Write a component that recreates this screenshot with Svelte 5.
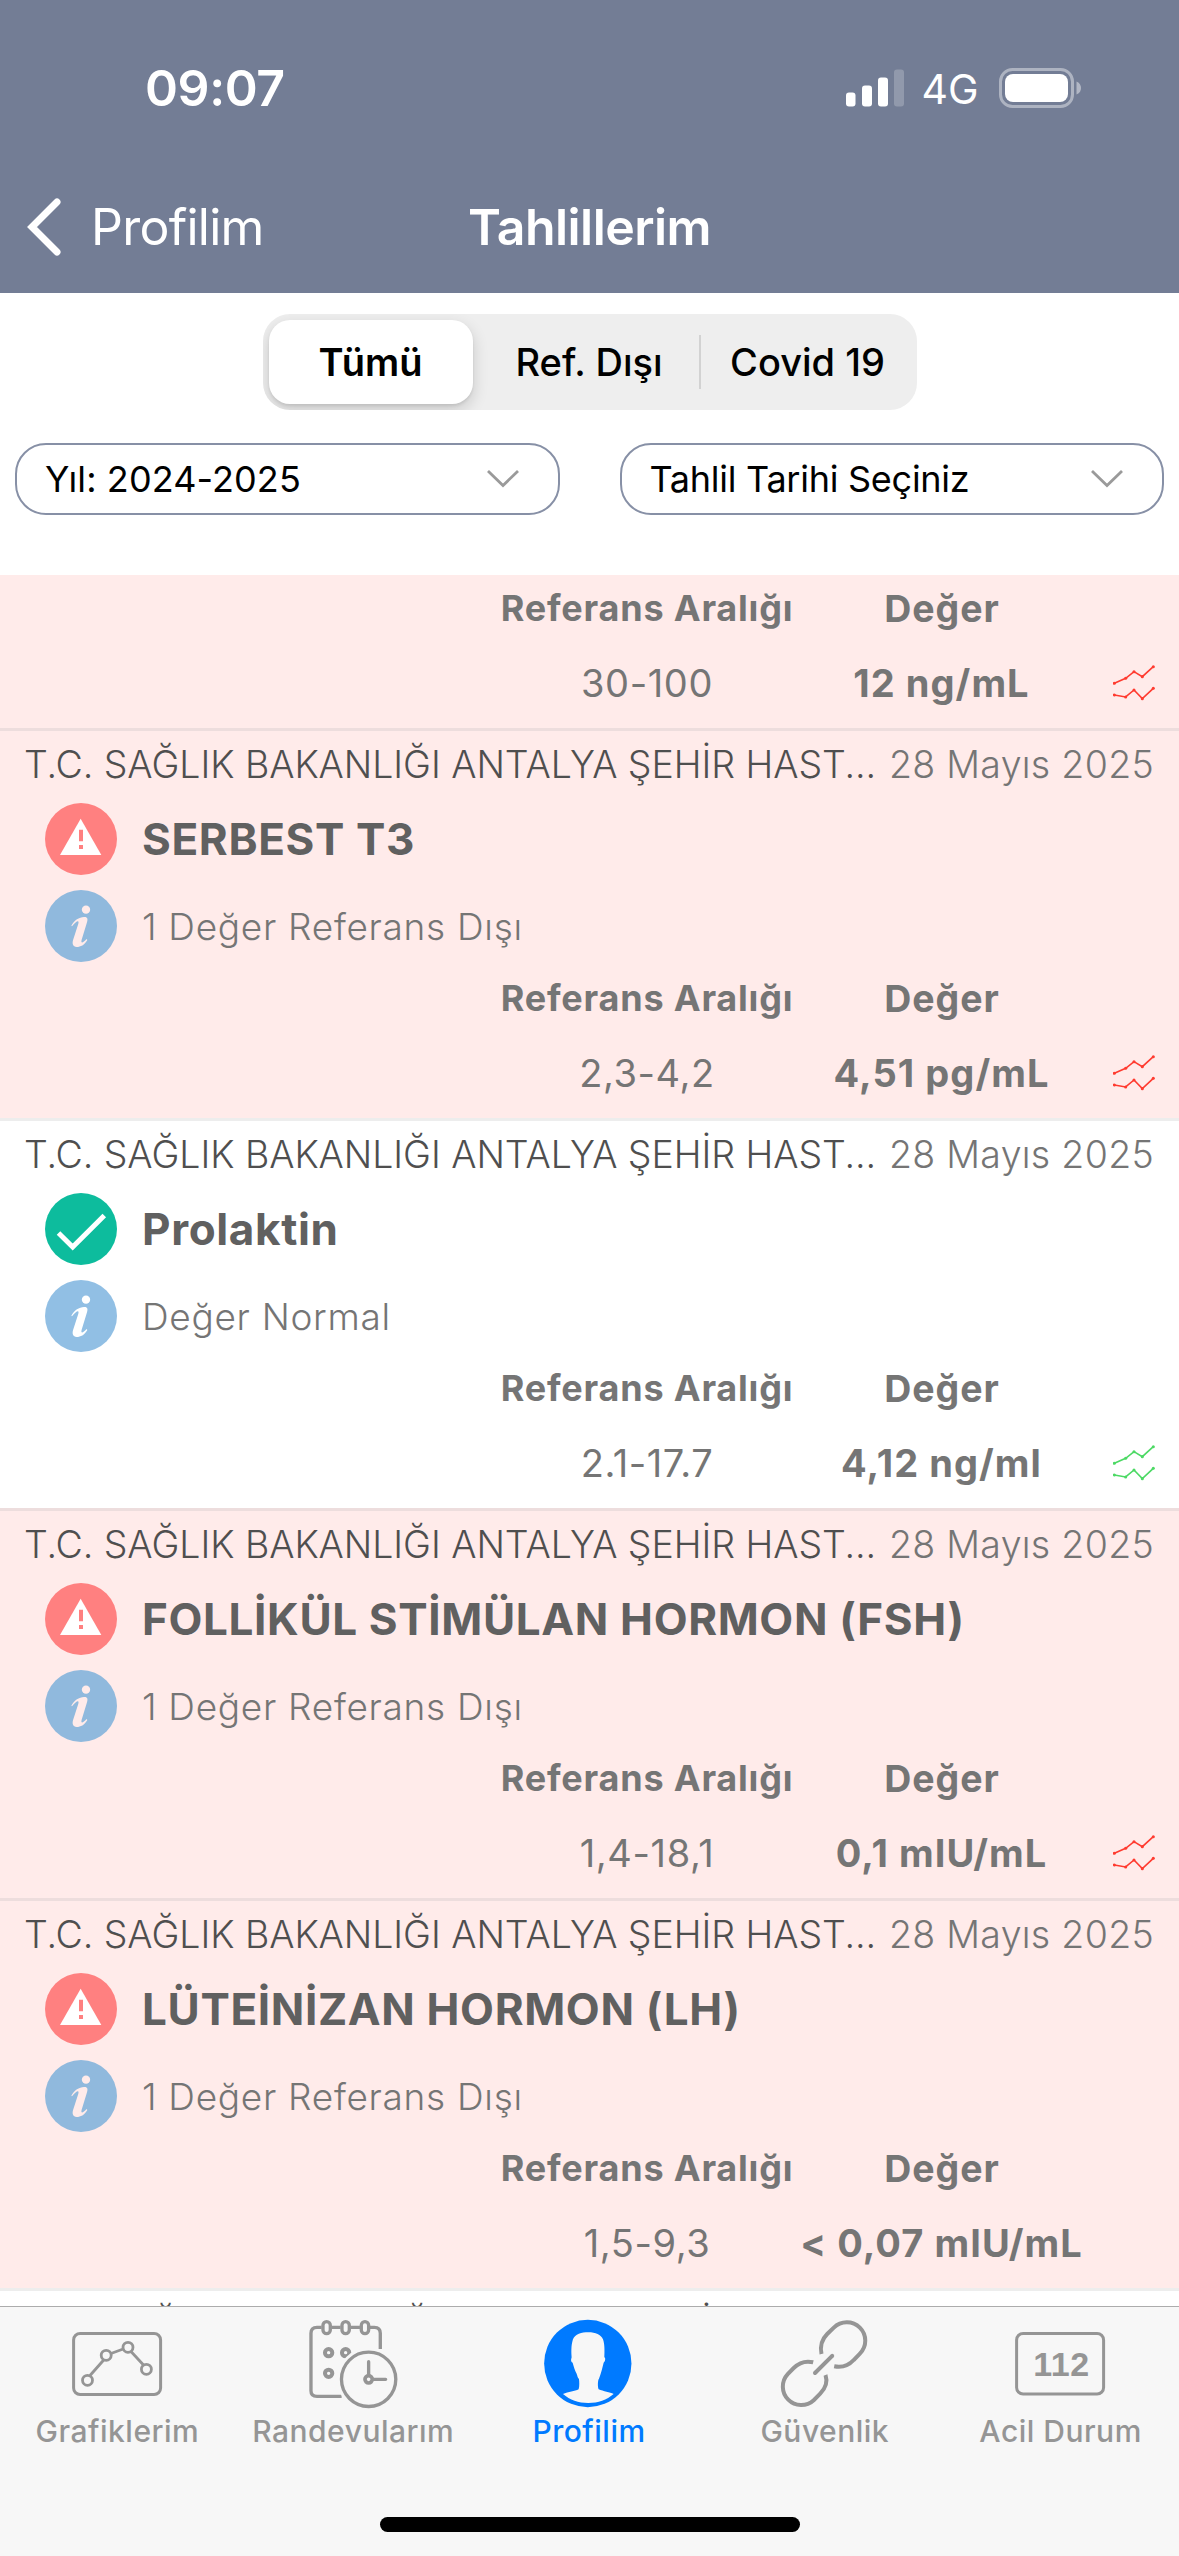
<script>
  const HOSPITAL = 'T.C. SAĞLIK BAKANLIĞI ANTALYA ŞEHİR HASTANESİ';
  const DATE = '28 Mayıs 2025';

  const results = [
    { partial: true, normal: false, range: '30-100', value: '12 ng/mL', trend: true },
    { name: 'SERBEST T3', normal: false, note: '1 Değer Referans Dışı', range: '2,3-4,2', value: '4,51 pg/mL', trend: true },
    { name: 'Prolaktin', normal: true, note: 'Değer Normal', range: '2.1-17.7', value: '4,12 ng/ml', trend: true },
    { name: 'FOLLİKÜL STİMÜLAN HORMON (FSH)', normal: false, note: '1 Değer Referans Dışı', range: '1,4-18,1', value: '0,1 mIU/mL', trend: true },
    { name: 'LÜTEİNİZAN HORMON (LH)', normal: false, note: '1 Değer Referans Dışı', range: '1,5-9,3', value: '< 0,07 mIU/mL', trend: false }
  ];

  const segments = ['Tümü', 'Ref. Dışı', 'Covid 19'];
  const selects = ['Yıl: 2024-2025', 'Tahlil Tarihi Seçiniz'];
  const tabs = [
    { id: 'chart', label: 'Grafiklerim' },
    { id: 'calendar', label: 'Randevularım' },
    { id: 'profile', label: 'Profilim' },
    { id: 'link', label: 'Güvenlik' },
    { id: 'emergency', label: 'Acil Durum' }
  ];
  let segment = $state(0);
  let tab = $state('profile');
</script>

<div class="screen">
  <header>
    <div class="status">
      <span class="time">09:07</span>
      <svg class="signal" viewBox="0 0 58 38">
        <rect x="0" y="23.5" width="9.5" height="14" rx="3" />
        <rect x="16" y="16.5" width="10" height="21" rx="3" />
        <rect x="32" y="8.5" width="10" height="29" rx="3" />
        <rect x="48" y="0.5" width="10" height="37" rx="3" opacity=".22" />
      </svg>
      <span class="network">4G</span>
      <svg class="battery" viewBox="0 0 82 40">
        <rect x="1.5" y="1.5" width="72" height="37" rx="12" fill="none" stroke="#fff" stroke-opacity=".42" stroke-width="3" />
        <rect x="6" y="6" width="63" height="28" rx="8" />
        <path d="M77.5 13.5 C81 15 82 17.500 82 20 C82 22.500 81 25 77.500 26.500 Z" opacity=".45" />
      </svg>
    </div>
    <div class="nav">
      <button class="back">
        <svg viewBox="0 0 34 60"><path d="M30 5 L5 30 L30 55" /></svg>
        Profilim
      </button>
      <h1>Tahlillerim</h1>
    </div>
  </header>

  <div class="segments">
    {#each segments as label, i}
      <button class:active={segment === i} onclick={() => (segment = i)}>{label}</button>
    {/each}
  </div>

  <div class="filters">
    {#each selects as label, i}
      <button class:tight={i === 1}>
        {label}
        <svg viewBox="0 0 34 20"><path d="M2 2 L17 16.500 L32 2" /></svg>
      </button>
    {/each}
  </div>

  <main>
    {#each results as r}
      <article class:normal={r.normal} class:partial={r.partial}>
        {#if !r.partial}
          <div class="source">
            <span class="hospital">{HOSPITAL.slice(0, 40)}...</span>
            <span class="date">{DATE}</span>
          </div>
          <div class="line">
            {#if r.normal}
              <svg viewBox="0 0 72 72">
                <circle cx="36" cy="36" r="36" fill="#0dbc9d" />
                <path d="M13.500 40 L27.700 54 L59.300 22.500" fill="none" stroke="#fff" stroke-width="5" />
              </svg>
            {:else}
              <svg viewBox="45 21 216 216">
                <circle cx="153" cy="129" r="108" fill="#ff8080" />
                <path d="M152 68 L214 177 H90 Z" fill="#fff" />
                <path d="M147 101 H159 V136 H147 Z M147 147 H159 V159 H147 Z" fill="#ff8080" />
              </svg>
            {/if}
            <h2>{r.name}</h2>
          </div>
          <div class="line">
            <svg viewBox="45 281 216 216" class="info">
              <circle cx="153" cy="389" r="108" />
              <circle cx="168" cy="340" r="12.500" class="mark" />
              <path class="mark" d="M124 388 C133 371 147 363 162 362 C173 361 174 368 171 378 L155 430 C152 441 157 442 170 428 L172 431 C163 446 152 452 140 452 C129 451 126 443 129 432 L145 382 C148 372 141 371 126 390 Z" />
            </svg>
            <p>{r.note}</p>
          </div>
        {/if}
        <div class="grid heads">
          <span class="range-head">Referans Aralığı</span>
          <span class="value-head">Değer</span>
        </div>
        <div class="grid">
          <span class="range">{r.range}</span>
          <span class="value">{r.value}</span>
          {#if r.trend}
            <svg class="trend" viewBox="27 32 126 106">
              <polyline points="31,87 65,72 90,52 115,67 148,37" />
              <polyline points="31,122 65,128 90,107 115,133 148,102" />
              {#each [[31, 87], [65, 72], [90, 52], [115, 67], [148, 37], [31, 122], [65, 128], [90, 107], [115, 133], [148, 102]] as [x, y]}
                <circle cx={x} cy={y} r="4.600" />
              {/each}
            </svg>
          {/if}
        </div>
      </article>
    {/each}
    <article class="normal">
      <div class="source">
        <span class="hospital">{HOSPITAL.slice(0, 40)}...</span>
        <span class="date">{DATE}</span>
      </div>
    </article>
  </main>

  <footer>
    <nav>
      {#each tabs as t}
        <button class:active={tab === t.id} onclick={() => (tab = t.id)}>
          <svg viewBox="0 0 96 96">
            {#if t.id === 'chart'}
              <rect x="3.600" y="17.500" width="87" height="61" rx="6.500" stroke-width="3" />
              <path stroke-width="2.800" d="M20 59.500 L33.700 44 M41 37.500 L53.200 33 M61 35.500 L73.500 49" />
              {#each [[17.5, 64.3], [36.2, 39.3], [58, 31.3], [76.4, 53.3]] as [x, y]}
                <circle cx={x} cy={y} r="5" stroke-width="2.800" />
              {/each}
            {:else if t.id === 'calendar'}
              <g transform="translate(-5.700 -4) scale(.33333)" stroke-width="10">
                <path d="M124 253 H50 Q32 253 32 236 V64 Q32 46 50 46 H64 M94 46 H121 M151 46 H179 M209 46 H222 Q240 46 240 64 V111" />
                <rect x="68" y="29" width="22" height="36" rx="11" />
                <rect x="125" y="29" width="22" height="36" rx="11" />
                <rect x="183" y="29" width="22" height="36" rx="11" />
                <circle cx="85" cy="122" r="11" stroke-width="12" />
                <circle cx="136" cy="122" r="11" stroke-width="12" />
                <circle cx="85" cy="184" r="11" stroke-width="12" />
                <circle cx="205" cy="202" r="95" fill="#f7f7f7" stroke="none" />
                <circle cx="205" cy="202" r="81.500" />
                <circle cx="205" cy="202" r="11" stroke-width="11" />
                <path stroke-linecap="round" d="M205 190 V149 M217 202 H256" />
              </g>
            {:else if t.id === 'profile'}
              <g transform="translate(-2.700 -4) scale(.33333)" stroke="none">
                <circle cx="148.500" cy="154.500" r="131" fill="currentColor" />
                <path fill="#f7f7f7" d="M74 246 C90 240 110 238 121 232 C124 222 123 210 122 200 C119 200 117 190 115 185 C110 175 106 163 103 152 C98 150 97 145 100 136 C98 110 100 95 104 82 C110 66 130 61 150 61 C172 61 188 68 194 82 C199 95 199 115 198 136 C202 137 202 148 196 152 C193 165 188 185 182 200 C178 205 178 225 181 232 C195 238 215 241 226 246 C205 264 180 273 150 273 C120 273 95 264 74 246 Z" />
              </g>
            {:else if t.id === 'link'}
              <g stroke-width="4" transform="translate(-.800 0)">
                <path d="M45.300 38 C43.700 30.500 45.500 23.500 51 18 L57.600 11.600 A18.400 18.400 0 0 1 83.700 37.600 L77.500 44 C72 50 65 51.700 58 50.300" />
                <path d="M37 46.300 C30 44.600 23 46.500 17.500 52 L11.500 58.200 A18.400 18.400 0 0 0 37.500 84.200 L44 77.700 C49.500 72 51.500 65.500 49.300 59" />
                <path stroke-linecap="round" d="M56 39.800 L38.800 57" />
              </g>
            {:else}
              <rect x="3.600" y="17.500" width="87" height="60.500" rx="6.500" stroke-width="3" />
              <text x="48.500" y="60">112</text>
            {/if}
          </svg>
          <span>{t.label}</span>
        </button>
      {/each}
    </nav>
    <div class="home"></div>
  </footer>
</div>

<style>
  :global(body) { margin: 0; background: #fff; }
  .screen {
    width: 1179px;
    height: 2556px;
    display: flex;
    flex-direction: column;
    overflow: hidden;
    background: #fff;
    font-family: Inter, 'Noto Sans', sans-serif;
  }
  button {
    border: 0;
    padding: 0;
    background: none;
    font: inherit;
    color: inherit;
  }
  svg { display: block; flex: none; }
  h1, h2, p { margin: 0; }
  span, button, h1, h2, p { white-space: nowrap; }

  header {
    height: 293px;
    flex: none;
    background: #737d95;
    color: #fff;
  }
  .status {
    height: 176px;
    display: flex;
    align-items: center;
    padding: 0 98px 0 145px;
  }
  .status svg { fill: #fff; }
  .time { font-size: 50px; font-weight: 600; letter-spacing: -.4px; }
  .signal { width: 58px; height: 38px; margin-left: auto; }
  .network { width: 60px; margin: 2px 17.500px 0 18px; font-size: 41px; font-weight: 400; }
  .battery { width: 82px; height: 40px; }
  .nav {
    height: 102px;
    display: grid;
    grid-template-columns: 1fr auto 1fr;
    align-items: center;
  }
  .back {
    display: flex;
    align-items: center;
    gap: 30px;
    padding-left: 27px;
    font-size: 50px;
    letter-spacing: -.75px;
  }
  .back svg {
    width: 34px;
    height: 60px;
    fill: none;
    stroke: #fff;
    stroke-width: 7;
    stroke-linecap: round;
  }
  h1 { font-size: 50px; font-weight: 600; letter-spacing: -.55px; }

  .segments {
    display: grid;
    grid-template-columns: 204px 228px 211px;
    width: 643px;
    height: 84px;
    flex: none;
    box-sizing: content-box;
    margin: 21px auto 0;
    padding: 6px 5px 6px 6px;
    border-radius: 27px;
    background: #eee;
    overflow: hidden;
  }
  .segments button {
    font-size: 38px;
    font-weight: 500;
    color: #000;
  }
  .segments button:last-child { padding-left: 3px; }
  .segments button.active {
    font-weight: 600;
    border-radius: 21px;
    background: #fff;
    box-shadow: 0 6px 16px rgba(0, 0, 0, .16), 0 2px 3px rgba(0, 0, 0, .08);
  }
  .segments button:nth-child(2) {
    padding-left: 5px;
    background: linear-gradient(#d2d2d2, #d2d2d2) right center / 2px 54px no-repeat;
  }

  .filters {
    display: grid;
    grid-template-columns: 1fr 1fr;
    gap: 60px;
    height: 72px;
    flex: none;
    margin: 33px 15px 60px;
  }
  .filters button {
    display: flex;
    align-items: center;
    justify-content: space-between;
    box-sizing: border-box;
    padding: 0 38px 0 28px;
    border: 2px solid #8790a6;
    border-radius: 31px;
    font-size: 36px;
    letter-spacing: .1px;
    color: #000;
  }
  .filters .tight { letter-spacing: -.26px; }
  .filters svg {
    width: 34px;
    height: 20px;
    fill: none;
    stroke: #9a9a9a;
    stroke-width: 2.800;
  }

  main {
    height: 1731px;
    flex: none;
    overflow: hidden;
  }
  article {
    --row: #ffebea;
    box-sizing: border-box;
    height: 390px;
    border-top: 3px solid #eddddd;
    background: var(--row);
    color: #757575;
  }
  article.normal { --row: #fff; border-top-color: #ededed; }
  article.partial { height: 156px; margin-top: -3px; border-top: 0; }
  .source {
    height: 67px;
    margin-bottom: 5px;
    display: flex;
    align-items: center;
    justify-content: space-between;
    padding: 0 25px 0 24px;
    font-size: 37.500px;
    font-weight: 300;
  }
  .hospital { color: #4f4f4f; letter-spacing: -.05px; }
  .date { letter-spacing: .3px; }
  .line {
    height: 72px;
    margin-bottom: 15px;
    display: flex;
    align-items: center;
    gap: 25px;
    padding-left: 45px;
  }
  .line + .line { margin-bottom: 0; }
  .line svg { width: 72px; height: 72px; }
  .info { fill: #90b9dd; }
  .normal .info { fill: #91bfe4; }
  .info .mark { fill: var(--row); }
  h2 {
    font-size: 44px;
    font-weight: 700;
    letter-spacing: .65px;
    color: #606060;
  }
  p { font-size: 37px; font-weight: 300; letter-spacing: .7px; }
  .grid {
    height: 74px;
    display: grid;
    grid-template-columns: 306px 282px 1fr;
    align-items: center;
    justify-items: center;
    padding: 0 24px 0 494px;
  }
  .heads { height: 73px; padding-bottom: 1px; }
  .heads span { margin-top: -1px; }
  .range-head { font-size: 36px; font-weight: 700; letter-spacing: .8px; }
  .value-head { font-size: 37.500px; font-weight: 700; letter-spacing: 1px; padding-left: 2px; }
  .range { font-size: 38px; letter-spacing: .6px; }
  .value { font-size: 38px; font-weight: 700; letter-spacing: 1.050px; padding-left: 1px; }
  .trend {
    width: 42px;
    height: 35.300px;
    justify-self: end;
    fill: none;
    stroke: #ff3b30;
    stroke-width: 4.800;
  }
  .trend circle { fill: #ff3b30; stroke: none; }
  .normal .trend { stroke: #4cd964; }
  .normal .trend circle { fill: #4cd964; }

  footer {
    flex: 1;
    border-top: 1px solid #acacac;
    background: #f7f7f7;
    display: flex;
    flex-direction: column;
    align-items: center;
  }
  nav {
    width: 100%;
    display: grid;
    grid-template-columns: repeat(5, 1fr);
  }
  nav button {
    display: flex;
    flex-direction: column;
    align-items: center;
    color: #959595;
    font-size: 30px;
    font-weight: 500;
    letter-spacing: .5px;
    line-height: 21px;
  }
  nav button.active { color: #007aff; }
  nav span { padding-right: 1px; }
  nav svg {
    width: 96px;
    height: 96px;
    margin: 9px 0;
    fill: none;
    stroke: currentColor;
  }
  nav text {
    font: 700 34px 'Liberation Sans', sans-serif;
    fill: currentColor;
    stroke: none;
    text-anchor: middle;
  }
  .home {
    width: 420px;
    height: 15px;
    margin-top: 75px;
    border-radius: 8px;
    background: #000;
  }
</style>
